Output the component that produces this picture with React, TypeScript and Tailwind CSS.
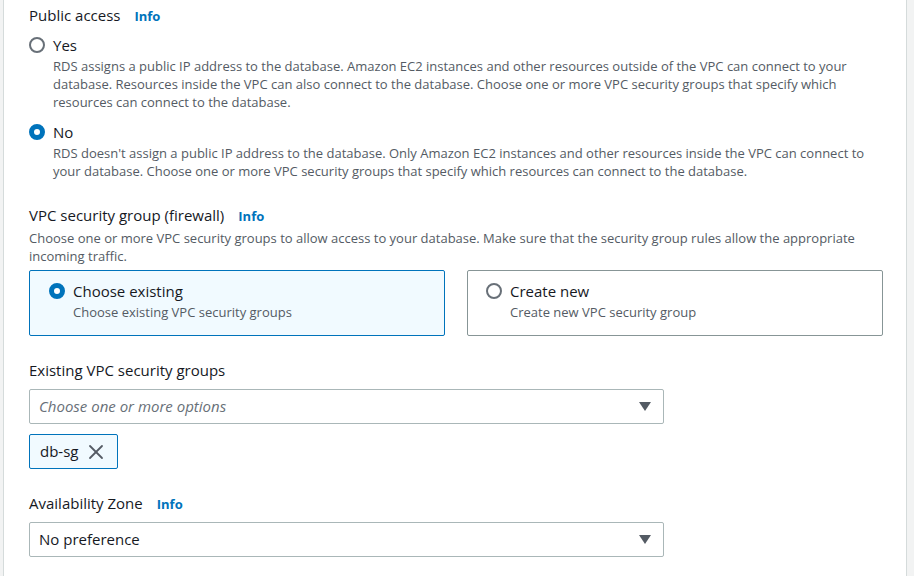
import { X } from 'lucide-react'

function Radio({ checked }: { checked: boolean }) {
  if (checked) {
    return <span className="mt-[3px] box-border h-4 w-4 shrink-0 rounded-full border-[5px] border-[#0073bb] bg-white" />
  }
  return <span className="mt-[3px] box-border h-4 w-4 shrink-0 rounded-full border-2 border-[#687078] bg-white" />
}

function Info() {
  return <span className="ml-[14px] text-[13px] font-bold text-[#0073bb]">Info</span>
}

function Caret() {
  return (
    <svg width="12" height="10" viewBox="0 0 12 10" className="shrink-0">
      <path d="M0 0 H12 L6 9 Z" fill="#545b64" />
    </svg>
  )
}

const options = [
  {
    label: 'Yes',
    checked: false,
    desc: 'RDS assigns a public IP address to the database. Amazon EC2 instances and other resources outside of the VPC can connect to your database. Resources inside the VPC can also connect to the database. Choose one or more VPC security groups that specify which resources can connect to the database.',
  },
  {
    label: 'No',
    checked: true,
    desc: "RDS doesn't assign a public IP address to the database. Only Amazon EC2 instances and other resources inside the VPC can connect to your database. Choose one or more VPC security groups that specify which resources can connect to the database.",
  },
]

export default function App() {
  return (
    <div className="flex h-[576px] w-[914px] bg-white font-['Open_Sans',sans-serif] text-[#16191f]">
      <div className="w-[4px] shrink-0 border-r border-[#d5dbdb] bg-[#f2f3f3]" />
      <div className="w-[902px] shrink-0 pl-[25px] pr-[23px] pt-[4px]">
        {/* Public access */}
        <div className="flex items-baseline text-[15px] leading-[22px]">
          Public access <Info />
        </div>
        <div className="mt-[7px] flex flex-col gap-[10px]">
          {options.map((o) => (
            <div key={o.label} className="flex gap-2">
              <Radio checked={o.checked} />
              <div>
                <div className="text-[15px] leading-[22px]">{o.label}</div>
                <div className="mt-[1px] text-[13px] leading-[18px] text-[#545b64]">{o.desc}</div>
              </div>
            </div>
          ))}
        </div>

        {/* VPC security group */}
        <div className="mt-[24px] flex items-baseline text-[15px] leading-[22px]">
          VPC security group (firewall) <Info />
        </div>
        <div className="mt-[2px] text-[13px] leading-[18px] text-[#545b64]">
          Choose one or more VPC security groups to allow access to your database. Make sure that the security group rules allow the appropriate incoming traffic.
        </div>
        <div className="mt-[5px] grid grid-cols-2 gap-[22px]">
          <div className="flex h-[66px] gap-2 rounded-[2px] border border-[#0073bb] bg-[#f1faff] px-[19px] pt-[9px]">
            <Radio checked />
            <div>
              <div className="text-[15px] leading-[22px]">Choose existing</div>
              <div className="mt-[1px] text-[13px] leading-[18px] text-[#545b64]">Choose existing VPC security groups</div>
            </div>
          </div>
          <div className="flex h-[66px] gap-2 rounded-[2px] border border-[#879596] px-[18px] pt-[9px]">
            <Radio checked={false} />
            <div>
              <div className="text-[15px] leading-[22px]">Create new</div>
              <div className="mt-[1px] text-[13px] leading-[18px] text-[#545b64]">Create new VPC security group</div>
            </div>
          </div>
        </div>

        {/* Existing groups */}
        <div className="mt-[23px] text-[15px] leading-[22px]">Existing VPC security groups</div>
        <div className="mt-[8px] flex h-[35px] w-[635px] items-center justify-between rounded-[2px] border border-[#aab7b8] pl-[9px] pr-[12px]">
          <span className="text-[15px] italic text-[#687078]">Choose one or more options</span>
          <Caret />
        </div>
        <div className="mt-[10px] flex h-[35px] w-[89px] items-center gap-[6px] rounded-[2px] border border-[#0073bb] bg-[#f1faff] pl-[10px]">
          <span className="text-[15px]">db-sg</span>
          <X size={24} strokeWidth={1.8} className="text-[#545b64]" />
        </div>

        {/* Availability Zone */}
        <div className="mt-[23px] flex items-baseline text-[15px] leading-[22px]">
          Availability Zone <Info />
        </div>
        <div className="mt-[7px] flex h-[35px] w-[635px] items-center justify-between rounded-[2px] border border-[#aab7b8] pl-[9px] pr-[12px]">
          <span className="text-[15px]">No preference</span>
          <Caret />
        </div>
      </div>
      <div className="flex-1 border-l border-[#d5dbdb] bg-[#f2f3f3]" />
    </div>
  )
}
